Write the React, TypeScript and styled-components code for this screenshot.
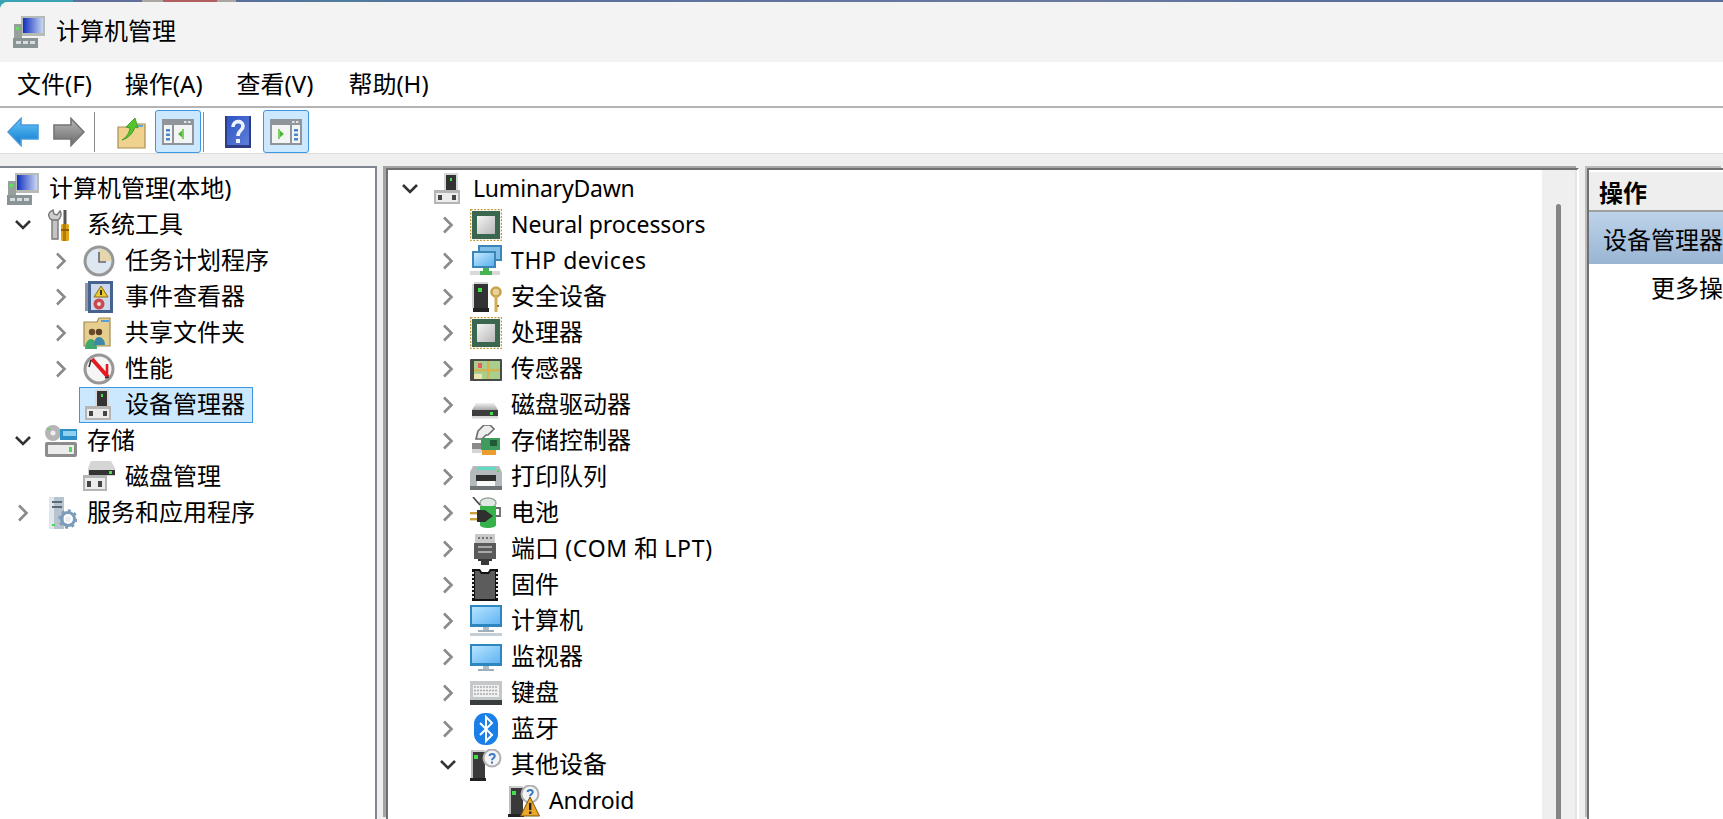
import React from "react";
import styled, { createGlobalStyle } from "styled-components";

const Global = createGlobalStyle`
  html, body { margin: 0; padding: 0; height: 100%; overflow: hidden; }
  body { font-family: "Noto Sans", "Noto Sans CJK SC", sans-serif; font-size: 24px; color: #000; }
  #root { height: 100%; }
`;

const Desktop = styled.div`
  height: 100vh;
  box-sizing: border-box;
  padding-top: 2px;
  overflow: hidden;
  background: linear-gradient(90deg, #3aa3b3 0, #3aa3b3 73px, #5f6f9a 73px, #5f6f9a 142px, #aaa7a2 142px, #aaa7a2 163px, #b25d5f 163px, #b25d5f 217px, #a9a5a0 217px, #a9a5a0 236px, #5a6e9c 236px, #4f7c9c 340px, #5a6e9c 480px, #6a7a9f 1100px, #5a6e9c 1300px);
`;
const Window = styled.div`
  height: 100%;
  display: flex;
  flex-direction: column;
  background: #efefef;
  border-top-left-radius: 8px;
  overflow: hidden;
`;
const TitleBar = styled.div`
  height: 60px;
  flex: none;
  display: flex;
  align-items: center;
  gap: 12px;
  padding-left: 13px;
  background: #f3f3f3;
`;
const TitleText = styled.span`
  line-height: 58px;
  margin-top: -2px;
  margin-left: -1px;
`;
const MenuBar = styled.div`
  height: 44px;
  flex: none;
  display: flex;
  align-items: center;
  gap: 33px;
  padding-left: 17px;
  background: #fff;
  border-bottom: 2px solid #b4b4b4;
`;
const MenuItem = styled.span<{ $nudge?: number }>`
  line-height: 44px;
  white-space: nowrap;
  margin-left: ${(p) => p.$nudge ?? 0}px;
`;
const Toolbar = styled.div`
  height: 46px;
  flex: none;
  box-sizing: border-box;
  display: flex;
  align-items: flex-start;
  padding-top: 2px;
  background: #fff;
  border-bottom: 1px solid #dcdcdc;
`;
const ToolButton = styled.div<{ $active?: boolean; $offset?: number }>`
  width: 46px;
  height: 43px;
  box-sizing: border-box;
  flex: none;
  display: flex;
  align-items: center;
  justify-content: center;
  border: 1px solid ${(p) => (p.$active ? "#3d97e0" : "transparent")};
  border-radius: 3px;
  background: ${(p) => (p.$active ? "#cce8ff" : "transparent")};
  margin-left: ${(p) => p.$offset ?? 0}px;
`;
const ToolSeparator = styled.div<{ $after: number }>`
  width: 1px;
  height: 40px;
  flex: none;
  margin: 2px ${(p) => p.$after}px 0 2px;
  background: #8c8c8c;
`;
const Panes = styled.div`
  flex: 1;
  min-height: 0;
  display: flex;
  padding-top: 14px;
`;
const TreePane = styled.div`
  width: 377px;
  flex: none;
  box-sizing: border-box;
  margin-top: -2px;
  padding-top: 3px;
  background: #fff;
  border-top: 2px solid #808790;
  border-right: 2px solid #808790;
  overflow: hidden;
`;
const MainPane = styled.div`
  width: 1193px;
  margin-left: 9px;
  flex: none;
  box-sizing: border-box;
  display: flex;
  background: #fff;
  border-top: 2px solid #707070;
  border-left: 2px solid #707070;
  border-right: 2px solid #fff;
  box-shadow: -3px -2px 0 #a4a4a4;
`;
const MainTree = styled.div`
  flex: 1;
  padding-top: 1px;
  overflow: hidden;
`;
const ScrollTrack = styled.div`
  width: 33px;
  flex: none;
  position: relative;
  background: #efefef;
  border-right: 2px solid #e4e4e4;
  overflow: hidden;
`;
const ScrollThumb = styled.div`
  position: absolute;
  left: 14px;
  top: 34px;
  bottom: -10px;
  width: 5px;
  border-radius: 3px 3px 0 0;
  background: #858585;
`;
const ActionPane = styled.div`
  flex: 1;
  min-width: 0;
  margin-left: 8px;
  padding-top: 2px;
  background: #fff;
  border-top: 2px solid #707070;
  border-left: 2px solid #707070;
  box-shadow: -2px -2px 0 #bcbcbc;
  overflow: hidden;
`;
const ActionHeader = styled.div`
  height: 38px;
  padding-left: 10px;
  line-height: 42px;
  font-weight: 700;
  background: #eeeeee;
  border-bottom: 2px solid #a0a0a0;
`;
const ActionGroup = styled.div`
  height: 52px;
  padding-left: 14px;
  line-height: 56px;
  white-space: nowrap;
  background: linear-gradient(180deg, #bdd3ea, #99b5d3);
`;
const ActionItem = styled.div`
  height: 50px;
  padding-left: 62px;
  line-height: 48px;
  white-space: nowrap;
`;
const Row = styled.div<{ $base: number; $indent: number }>`
  height: 36px;
  display: flex;
  align-items: center;
  padding-left: ${(p) => p.$base + p.$indent * 38}px;
`;
const ChevronCell = styled.div`
  width: 38px;
  height: 36px;
  flex: none;
  display: flex;
  align-items: center;
  justify-content: center;
  padding-right: 6px;
  box-sizing: border-box;
`;
const Item = styled.div<{ $selected?: boolean; $gap: number }>`
  height: 36px;
  box-sizing: border-box;
  display: flex;
  align-items: center;
  gap: ${(p) => p.$gap}px;
  margin-left: -4px;
  padding: 0 7px 0 3px;
  border: 1px solid ${(p) => (p.$selected ? "#3d97e0" : "transparent")};
  background: ${(p) => (p.$selected ? "#cce8ff" : "transparent")};
  white-space: nowrap;
`;
const Label = styled.span`
  line-height: 34px;
  margin-top: -2px;
`;
const Latin = styled.span<{ $spacing: number }>`
  font-size: 23px;
  letter-spacing: ${(p) => p.$spacing}px;
`;
const IconSvg = styled.svg`
  width: 32px;
  height: 32px;
  flex: none;
  display: block;
`;

const Chevron = ({ open }: { open?: boolean }) =>
  open ? (
    <svg width="18" height="12" viewBox="0 0 18 12"><path d="M2 2l7 7 7-7" fill="none" stroke="#333" strokeWidth="2.6" /></svg>
  ) : (
    <svg width="12" height="18" viewBox="0 0 12 18"><path d="M2 1.5l7.5 7.500L2 16.500" fill="none" stroke="#8a8a8a" strokeWidth="2.6" /></svg>
  );

const Base = () => (
  <>
    <rect x="2" y="17" width="26" height="14" fill="#b5b5b5" />
    <rect x="4" y="20" width="22" height="9" fill="#ececec" />
    <rect x="6" y="22" width="4" height="5" fill="#444" />
    <rect x="20" y="22" width="4" height="5" fill="#444" />
  </>
);
const Tower = () => (
  <g>
    <rect x="1" y="1" width="14" height="28" fill="#3a3a3a" />
    <rect x="1" y="1" width="14" height="2" fill="#cfcfcf" />
    <rect x="1" y="1" width="2" height="28" fill="#bdbdbd" />
    <rect x="4" y="6" width="4" height="4" fill="#41e04a" />
    <rect x="0" y="29" width="16" height="3" fill="#222" />
  </g>
);
const Question = () => (
  <g>
    <circle cx="22" cy="9" r="8.500" fill="#f4f4f4" stroke="#b0b0b0" strokeWidth="2" />
    <path d="M19.500 7c.4-2.600 5.200-2.600 5.200.2 0 2-2.700 2-2.700 4" fill="none" stroke="#3c78c8" strokeWidth="2" />
    <rect x="21" y="12.600" width="2" height="2" fill="#3c78c8" />
  </g>
);
const Chip = () => (
  <g>
    <defs>
      <linearGradient id="chipg" x1="0" y1="0" x2="1" y2="1"><stop offset="0" stopColor="#f4f4f4" /><stop offset="1" stopColor="#b8b8b8" /></linearGradient>
    </defs>
    <rect x="0.500" y="0.500" width="31" height="31" fill="none" stroke="#c09a3c" strokeWidth="1.600" strokeDasharray="2 1.400" />
    <rect x="2" y="2" width="28" height="28" fill="#3b6750" />
    <rect x="7" y="7" width="18" height="18" fill="url(#chipg)" />
  </g>
);

const icons: Record<string, React.ReactNode> = {
  mgmt: (
    <>
      <defs>
        <linearGradient id="mg" x1="0" x2="1"><stop offset="0" stopColor="#1230c0" /><stop offset="1" stopColor="#c8d6f2" /></linearGradient>
      </defs>
      <rect x="8" y="0" width="24" height="20" fill="#b6bbb6" />
      <rect x="10" y="2" width="20" height="15" fill="url(#mg)" />
      <rect x="1" y="8" width="8" height="14" fill="#98a09c" />
      <rect x="3" y="11" width="3" height="3" fill="#5fe05f" />
      <rect x="0" y="22" width="25" height="10" fill="#8a9396" />
      <rect x="3" y="25" width="5" height="3" fill="#d8dcdc" />
      <rect x="10" y="25" width="5" height="3" fill="#d8dcdc" />
      <rect x="17" y="25" width="5" height="3" fill="#d8dcdc" />
    </>
  ),
  tools: (
    <>
      <path d="M7 6v24h6V6" fill="#c4c4c4" stroke="#777" strokeWidth="1.400" />
      <path d="M5 3c-2 2-2 6 2 8h6c3-2 4-6 2-9l-3 4-3-1-1-4z" fill="#cfcfcf" stroke="#777" strokeWidth="1.400" />
      <rect x="18.500" y="1" width="3" height="14" fill="#555" />
      <rect x="16" y="15" width="8" height="17" rx="1.500" fill="#e0a51a" />
      <rect x="18" y="15" width="3" height="17" fill="#b27c05" />
      <rect x="16" y="20" width="8" height="2" fill="#8a6003" />
    </>
  ),
  clock: (
    <>
      <circle cx="16" cy="16" r="15.500" fill="#979797" />
      <circle cx="16" cy="16" r="12.500" fill="#dde7f2" />
      <path d="M16 16V3.500A12.500 12.500 0 0 1 28.500 16z" fill="#e6d6ab" />
      <path d="M16 7v10h7" fill="none" stroke="#666" strokeWidth="1.600" />
    </>
  ),
  events: (
    <>
      <rect x="2" y="2" width="4" height="28" fill="#8f96a2" />
      <rect x="5" y="0" width="25" height="32" fill="#46628f" />
      <rect x="8" y="3" width="19" height="26" fill="#cdd8ea" />
      <path d="M18 5l7 11H11z" fill="#edc82f" stroke="#8b6d10" strokeWidth="1" />
      <rect x="17" y="9" width="2" height="5" fill="#333" />
      <circle cx="16" cy="23" r="5.500" fill="#c84a50" />
      <circle cx="16" cy="23" r="2" fill="#f4d8d8" />
    </>
  ),
  shared: (
    <>
      <path d="M1 5h13l2-4h11v28H1z" fill="#e6cf8e" stroke="#a08a52" strokeWidth="1.200" />
      <rect x="18" y="3" width="8" height="2" fill="#5aa0d8" />
      <circle cx="9" cy="15" r="3.200" fill="#6b4a2c" />
      <circle cx="16" cy="15" r="3.200" fill="#5d3f25" />
      <path d="M2 32c0-6 3-10 6-10s6 4 6 10z" fill="#3fa86f" />
      <path d="M11 28c0-5 2-8 5-8s6 3 6 8z" fill="#3c88a8" />
    </>
  ),
  perf: (
    <>
      <circle cx="16" cy="16" r="15.500" fill="#979797" />
      <circle cx="16" cy="16" r="12.500" fill="#f5f5f5" />
      <path d="M9 6l16 18" stroke="#e21a22" strokeWidth="4" />
      <path d="M24 11v11" stroke="#e21a22" strokeWidth="2.600" />
      <path d="M8 7l-2 7M22 25l4-1" stroke="#333" strokeWidth="1.600" />
    </>
  ),
  device: (
    <>
      <rect x="12" y="0" width="14" height="18" fill="#d8d8d8" />
      <rect x="14" y="2" width="10" height="16" fill="#333" />
      <rect x="18" y="5" width="2" height="3" fill="#46e04e" />
      <Base />
    </>
  ),
  storage: (
    <>
      <circle cx="8" cy="8" r="8" fill="#b5b5b5" />
      <circle cx="8" cy="8" r="2.500" fill="#eee" />
      <rect x="2" y="3" width="3" height="2" fill="#63d85e" />
      <rect x="15" y="4" width="17" height="11" fill="#2b8fc8" />
      <rect x="18" y="6" width="13" height="5" fill="#8fd0ef" />
      <rect x="0" y="17" width="32" height="15" rx="2" fill="#8c8c8c" />
      <rect x="3" y="20" width="26" height="9" fill="#ececec" />
      <rect x="24" y="22" width="3" height="5" fill="#55d455" />
    </>
  ),
  disk: (
    <>
      <path d="M8 0h20l4 7v8H5V7z" fill="#d5d5d5" />
      <rect x="6" y="9" width="26" height="5" fill="#333" />
      <rect x="26" y="10" width="3" height="3" fill="#49e04f" />
      <rect x="0" y="14" width="24" height="16" fill="#b5b5b5" />
      <rect x="2" y="17" width="20" height="11" fill="#ececec" />
      <rect x="4" y="20" width="4" height="6" fill="#444" />
      <rect x="15" y="20" width="4" height="6" fill="#444" />
    </>
  ),
  services: (
    <>
      <rect x="4" y="0" width="15" height="32" fill="#b7c3ce" />
      <rect x="4" y="0" width="5" height="32" fill="#dfe6ec" />
      <rect x="7" y="4" width="10" height="2" fill="#5a6a7a" />
      <rect x="7" y="9" width="10" height="2" fill="#5a6a7a" />
      <rect x="7" y="27" width="3" height="2" fill="#4fd15a" />
      <circle cx="23" cy="22" r="6.500" fill="none" stroke="#7d9cba" strokeWidth="3" />
      <circle cx="23" cy="22" r="8.500" fill="none" stroke="#7d9cba" strokeWidth="2.400" strokeDasharray="3 3.600" />
      <circle cx="23" cy="22" r="3" fill="#e8eef4" />
    </>
  ),
  chip: <Chip />,
  thp: (
    <>
      <defs>
        <linearGradient id="thpg" x1="0" y1="0" x2="1" y2="1"><stop offset="0" stopColor="#c4eaff" /><stop offset="1" stopColor="#5cb0ef" /></linearGradient>
      </defs>
      <rect x="8" y="0" width="24" height="16" fill="#3b86b6" />
      <rect x="10" y="2" width="20" height="12" fill="#7fbfe8" />
      <rect x="2" y="6" width="24" height="17" fill="#3b86b6" />
      <rect x="4" y="8" width="20" height="13" fill="url(#thpg)" />
      <rect x="0" y="26" width="30" height="4" fill="#d9d9d9" />
      <path d="M13 23h6v3h3v4H10v-4h3z" fill="#46b452" />
    </>
  ),
  security: (
    <>
      <rect x="4" y="1" width="14" height="26" fill="#333" />
      <rect x="4" y="1" width="14" height="2" fill="#d4d4d4" />
      <rect x="2" y="3" width="2" height="24" fill="#d4d4d4" />
      <rect x="8" y="7" width="4" height="4" fill="#3ee446" />
      <rect x="3" y="27" width="16" height="4" fill="#222" />
      <circle cx="26" cy="11" r="4.500" fill="#e8d49a" stroke="#c9a24c" strokeWidth="2.600" />
      <rect x="24.500" y="15" width="3" height="16" fill="#d3ad55" />
      <rect x="27" y="24" width="2" height="2" fill="#a07e2e" />
    </>
  ),
  sensor: (
    <>
      <rect x="0" y="6" width="32" height="22" rx="1" fill="#474a45" />
      <rect x="4" y="8" width="26" height="18" fill="#a9cf8e" />
      <rect x="4" y="16" width="26" height="2.400" fill="#d8b24a" />
      <rect x="17" y="8" width="2.400" height="18" fill="#d8b24a" />
      <rect x="8" y="10" width="4" height="5" fill="#ee5a60" />
      <rect x="4" y="21" width="8" height="5" fill="#ece7b0" />
    </>
  ),
  drive: (
    <>
      <defs>
        <linearGradient id="drv" x1="0" y1="0" x2="0" y2="1"><stop offset="0" stopColor="#f0f0f0" /><stop offset="1" stopColor="#a8a8a8" /></linearGradient>
      </defs>
      <path d="M6 14h18l4 7H2z" fill="url(#drv)" />
      <rect x="2" y="21" width="26" height="6" fill="#3d3d3d" />
      <rect x="20" y="23" width="3" height="3" fill="#3fe24a" />
      <rect x="2" y="27" width="26" height="2.500" fill="#d8d8d8" />
    </>
  ),
  controller: (
    <>
      <path d="M8 6l6-6h6l4 4-6 6h-2l-4 4H6z" fill="#eee" stroke="#6b6b6b" strokeWidth="1.600" />
      <path d="M2 18h14v6H2z" fill="#8a8a8a" />
      <path d="M2 24h14v4H2z" fill="#d5d5d5" />
      <rect x="11" y="13" width="19" height="12" fill="#3f9a5e" />
      <rect x="20" y="15" width="7" height="6" fill="#1e5a38" />
      <path d="M12 25h14v5H12z" fill="#eb9d2d" />
    </>
  ),
  printer: (
    <>
      <path d="M3 5h26l3 6v14H0V11z" fill="#b4b9bc" />
      <rect x="7" y="6" width="18" height="3" fill="#5fdcc6" />
      <rect x="27" y="9" width="2" height="2" fill="#45e04e" />
      <rect x="6" y="14" width="20" height="6" fill="#2f2f2f" />
      <rect x="7" y="20" width="18" height="5" fill="#f8f8f8" />
      <rect x="0" y="25" width="32" height="4" fill="#6f7476" />
    </>
  ),
  battery: (
    <>
      <ellipse cx="18" cy="6" rx="8" ry="5" fill="#dfe8e2" stroke="#9aa49e" strokeWidth="1.400" />
      <path d="M10 9h16v19c0 4-16 4-16 0z" fill="#36b24a" />
      <path d="M26 11h4v8h-4" fill="none" stroke="#6a6a6a" strokeWidth="1.800" />
      <rect x="0" y="15" width="8" height="2.400" fill="#cda23c" />
      <rect x="0" y="21" width="8" height="2.400" fill="#cda23c" />
      <path d="M7 13h8l8 6-8 6H7z" fill="#2f2f2f" />
      <path d="M3 0l7 8" stroke="#444" strokeWidth="1.600" />
    </>
  ),
  port: (
    <>
      <rect x="5" y="1" width="20" height="10" fill="#c9c9c9" />
      <path d="M8 5h2m2 0h2m2 0h2m2 0h2" stroke="#555" strokeWidth="1.500" />
      <rect x="4" y="10" width="22" height="16" fill="#5a5a5a" />
      <rect x="8" y="13" width="14" height="2" fill="#a8a8a8" />
      <rect x="8" y="18" width="14" height="2" fill="#a8a8a8" />
      <rect x="8" y="26" width="14" height="2" fill="#333" />
      <rect x="11" y="26" width="8" height="6" fill="#3a3a3a" />
    </>
  ),
  firmware: (
    <>
      <path d="M2 0h8l2 3h6l2-3h8v32H2z" fill="#111" />
      <path d="M5 2h4l2 3h8l2-3h4v28H5z" fill="#5c5c5c" />
      <path d="M3 3v27M27 3v27" stroke="#e8e8e8" strokeWidth="2" strokeDasharray="2 2" />
    </>
  ),
  pc: (
    <>
      <defs>
        <linearGradient id="mon" x1="0" y1="0" x2="1" y2="1"><stop offset="0" stopColor="#b6e4ff" /><stop offset="1" stopColor="#62b4f2" /></linearGradient>
      </defs>
      <rect x="0" y="0" width="32" height="22" fill="#2d86c0" />
      <rect x="2" y="2" width="28" height="17" fill="url(#mon)" />
      <rect x="13" y="22" width="6" height="3" fill="#aebcc4" />
      <rect x="8" y="25" width="16" height="2" fill="#9fb0ba" />
      <rect x="0" y="28" width="32" height="3" fill="#c5ced4" />
    </>
  ),
  monitor: (
    <>
      <defs>
        <linearGradient id="mon2" x1="0" y1="0" x2="1" y2="1"><stop offset="0" stopColor="#b6e4ff" /><stop offset="1" stopColor="#62b4f2" /></linearGradient>
      </defs>
      <rect x="0" y="3" width="32" height="22" fill="#2d86c0" />
      <rect x="2" y="5" width="28" height="17" fill="url(#mon2)" />
      <rect x="13" y="25" width="6" height="3" fill="#aebcc4" />
      <rect x="8" y="28" width="16" height="2" fill="#9fb0ba" />
    </>
  ),
  keyboard: (
    <>
      <rect x="0" y="4" width="32" height="24" fill="#c4c8ca" />
      <rect x="3" y="8" width="26" height="12" fill="#f0f0f0" />
      <path d="M4 10h24M4 13.500h24M4 17h24" stroke="#a8aaac" strokeWidth="1.600" strokeDasharray="2 1" />
      <rect x="0" y="23" width="32" height="5" fill="#3a3d3e" />
    </>
  ),
  bluetooth: (
    <>
      <rect x="4" y="0" width="24" height="32" rx="11" fill="#1a7fe6" />
      <path d="M10 10l12 12-6 6V4l6 6-12 12" fill="none" stroke="#fff" strokeWidth="2" />
    </>
  ),
  other: (
    <>
      <Tower />
      <Question />
    </>
  ),
  warn: (
    <>
      <Tower />
      <Question />
      <path d="M22 12l9.500 19h-19z" fill="#eaa72a" stroke="#7a5410" strokeWidth="1" />
      <rect x="21" y="18" width="2.400" height="7" fill="#222" />
      <rect x="21" y="26.500" width="2.400" height="2.400" fill="#222" />
    </>
  ),
};

const Icon = ({ name }: { name: string }) => <IconSvg viewBox="0 0 32 32">{icons[name]}</IconSvg>;

const BackIcon = ({ flip, gray }: { flip?: boolean; gray?: boolean }) => (
  <svg width="32" height="30" viewBox="0 0 32 30" style={flip ? { transform: "scaleX(-1)" } : undefined}>
    <defs>
      <linearGradient id={gray ? "agr" : "abl"} x1="0" y1="0" x2="0" y2="1">
        <stop offset="0" stopColor={gray ? "#b8b8b8" : "#6ac8f8"} />
        <stop offset="1" stopColor={gray ? "#6a6a6a" : "#0a78d0"} />
      </linearGradient>
    </defs>
    <path d="M1 15L14 1.500V8h17v14H14v6.500z" fill={`url(#${gray ? "agr" : "abl"})`} stroke={gray ? "#747474" : "#4a9ad8"} strokeWidth="1.600" />
  </svg>
);
const UpIcon = () => (
  <svg width="32" height="36" viewBox="0 0 32 36">
    <path d="M3 13h10l2-3h15v24H3z" fill="#eed28e" stroke="#a88c50" strokeWidth="1.200" />
    <rect x="22" y="11" width="6" height="2" fill="#6aa6dc" />
    <path d="M7 26c5-3 7-7 8-12l-4-1 9-9 3 10-3-1c-2 6-6 11-13 13z" fill="#52c52e" stroke="#38901c" strokeWidth="0.800" />
  </svg>
);
const PanelIcon = ({ right }: { right?: boolean }) => (
  <svg width="32" height="26" viewBox="0 0 32 26">
    <rect width="32" height="26" fill="#8f959b" />
    <rect x="2" y="6" width="28" height="18" fill="#f3f5f5" />
    <rect x="22" y="2" width="2.500" height="2" fill="#dfe3e6" />
    <rect x="26" y="2" width="2.500" height="2" fill="#dfe3e6" />
    <rect x={right ? 20 : 10} y="6" width="2" height="18" fill="#8f959b" />
    {[10, 14.500, 19].map((y) => (
      <rect key={y} x={right ? 24 : 4} y={y} width="4" height="2.500" fill="#4c86c8" />
    ))}
    <path d={right ? "M8 10v10l6-5z" : "M22 10v10l-6-5z"} fill="#4cb53a" />
    <rect x={right ? 8 : 20} y="10" width="2" height="10" fill="#7ad060" />
  </svg>
);
const HelpIcon = () => (
  <svg width="26" height="32" viewBox="0 0 26 32">
    <defs>
      <linearGradient id="hlp" x1="0" y1="0" x2="1" y2="1"><stop offset="0" stopColor="#2b55c4" /><stop offset="1" stopColor="#5f7ed8" /></linearGradient>
    </defs>
    <rect width="26" height="32" fill="#2c3d86" />
    <rect x="2" y="0" width="22" height="29" fill="url(#hlp)" />
    <path d="M8 11c0-7 10-7 10-1 0 5-5 4-5 10" fill="none" stroke="#eef2ff" strokeWidth="3.600" />
    <rect x="11" y="23" width="4" height="4" fill="#eef2ff" />
  </svg>
);

type Node = { label: React.ReactNode; icon: string; indent: number; chevron?: "open" | "closed"; selected?: boolean };

const leftTree: Node[] = [
  { label: "计算机管理(本地)", icon: "mgmt", indent: 0 },
  { label: "系统工具", icon: "tools", indent: 0, chevron: "open" },
  { label: "任务计划程序", icon: "clock", indent: 1, chevron: "closed" },
  { label: "事件查看器", icon: "events", indent: 1, chevron: "closed" },
  { label: "共享文件夹", icon: "shared", indent: 1, chevron: "closed" },
  { label: "性能", icon: "perf", indent: 1, chevron: "closed" },
  { label: "设备管理器", icon: "device", indent: 2, selected: true },
  { label: "存储", icon: "storage", indent: 0, chevron: "open" },
  { label: "磁盘管理", icon: "disk", indent: 2 },
  { label: "服务和应用程序", icon: "services", indent: 0, chevron: "closed" },
];

const c = (label: React.ReactNode, icon: string): Node => ({ label, icon, indent: 1, chevron: "closed" });
const mainTree: Node[] = [
  { label: <Latin $spacing={-0.2}>LuminaryDawn</Latin>, icon: "device", indent: 0, chevron: "open" },
  c(<Latin $spacing={-0.1}>Neural processors</Latin>, "chip"),
  c(<Latin $spacing={0.6}>THP devices</Latin>, "thp"),
  c("安全设备", "security"),
  c("处理器", "chip"),
  c("传感器", "sensor"),
  c("磁盘驱动器", "drive"),
  c("存储控制器", "controller"),
  c("打印队列", "printer"),
  c("电池", "battery"),
  c(<>端口 <Latin $spacing={0.7}>(COM</Latin> 和 <Latin $spacing={0.7}>LPT)</Latin></>, "port"),
  c("固件", "firmware"),
  c("计算机", "pc"),
  c("监视器", "monitor"),
  c("键盘", "keyboard"),
  c("蓝牙", "bluetooth"),
  { label: "其他设备", icon: "other", indent: 1, chevron: "open" },
  { label: <Latin $spacing={-0.1}>Android</Latin>, icon: "warn", indent: 3 },
];

const Tree = ({ nodes, base, gap }: { nodes: Node[]; base: number; gap: number }) => (
  <>
    {nodes.map((n, i) => (
      <Row key={i} $base={base} $indent={n.indent}>
        {n.chevron && (
          <ChevronCell>
            <Chevron open={n.chevron === "open"} />
          </ChevronCell>
        )}
        <Item $selected={n.selected} $gap={gap}>
          <Icon name={n.icon} />
          <Label>{n.label}</Label>
        </Item>
      </Row>
    ))}
  </>
);

export default function App() {
  return (
    <Desktop>
      <Global />
      <Window>
        <TitleBar>
          <Icon name="mgmt" />
          <TitleText>计算机管理</TitleText>
        </TitleBar>
        <MenuBar>
          <MenuItem>文件(F)</MenuItem>
          <MenuItem>操作(A)</MenuItem>
          <MenuItem $nudge={1}>查看(V)</MenuItem>
          <MenuItem $nudge={2}>帮助(H)</MenuItem>
        </MenuBar>
        <Toolbar>
          <ToolButton><BackIcon /></ToolButton>
          <ToolButton><BackIcon flip gray /></ToolButton>
          <ToolSeparator $after={13} />
          <ToolButton><UpIcon /></ToolButton>
          <ToolButton $active $offset={1}><PanelIcon /></ToolButton>
          <ToolSeparator $after={11} />
          <ToolButton><HelpIcon /></ToolButton>
          <ToolButton $active $offset={2}><PanelIcon right /></ToolButton>
        </Toolbar>
        <Panes>
          <TreePane>
            <Tree nodes={leftTree} base={7} gap={10} />
          </TreePane>
          <MainPane>
            <MainTree>
              <Tree nodes={mainTree} base={6} gap={9} />
            </MainTree>
            <ScrollTrack>
              <ScrollThumb />
            </ScrollTrack>
          </MainPane>
          <ActionPane>
            <ActionHeader>操作</ActionHeader>
            <ActionGroup>设备管理器</ActionGroup>
            <ActionItem>更多操作</ActionItem>
          </ActionPane>
        </Panes>
      </Window>
    </Desktop>
  );
}
